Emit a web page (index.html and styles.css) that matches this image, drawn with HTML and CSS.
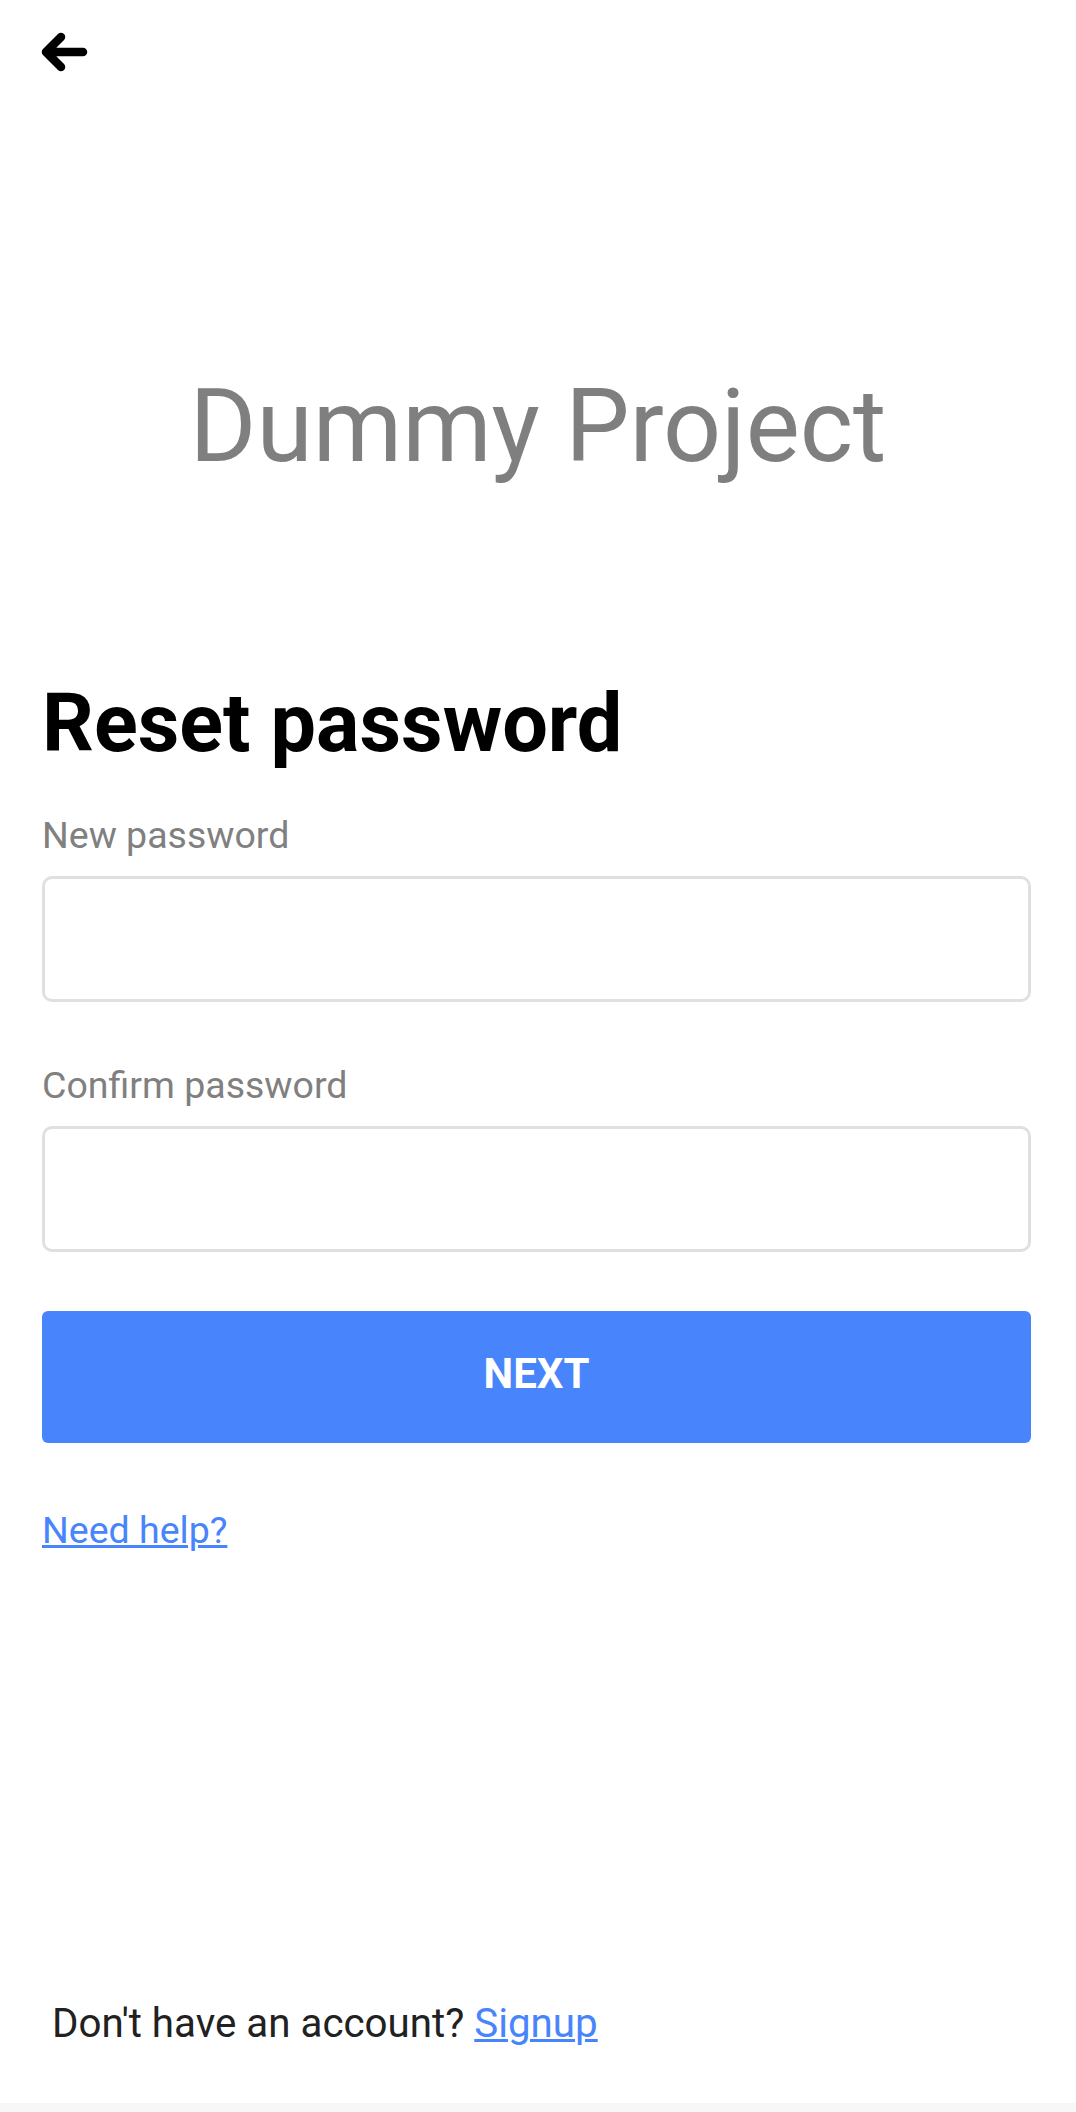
FILE: index.html
```html
<!DOCTYPE html>
<html lang="en">
<head>
    <meta charset="UTF-8">
    <meta name="viewport" content="width=device-width, initial-scale=1.0">
    <title>Reset password</title>
    <link rel="stylesheet" href="styles.css">
</head>
<body>
    <div class="screen">
        <div class="topbar">
            <a class="back" href="#" aria-label="Back">
                <svg width="56" height="56" viewBox="0 0 56 56">
                    <path d="M25 13L10 28l15 15M10 28h37" fill="none" stroke="#000" stroke-width="8.5" stroke-linecap="round" stroke-linejoin="round"/>
                </svg>
            </a>
        </div>

        <div class="brand">Dummy Project</div>

        <form class="form" onsubmit="return false;">
            <h1>Reset password</h1>

            <label class="label" for="newPassword">New password</label>
            <input class="field" type="password" id="newPassword">

            <label class="label label-second" for="confirmPassword">Confirm password</label>
            <input class="field" type="password" id="confirmPassword">

            <button class="next" type="submit">NEXT</button>

            <a class="help" href="#">Need help?</a>
        </form>

        <div class="footer">
            <p class="signup">Don't have an account? <a href="#">Signup</a></p>
        </div>
    </div>
    <div class="navbar"></div>
</body>
</html>
```

FILE: styles.css
```css
html, body {
    margin: 0;
    padding: 0;
}
body {
    font-family: Roboto, "Liberation Sans", sans-serif;
    background-color: #fff;
    display: flex;
    flex-direction: column;
    min-height: 100vh;
}
.screen {
    flex: 1;
    display: flex;
    flex-direction: column;
}
.topbar {
    padding: 24px 0 0 36px;
    height: 56px;
}
.back {
    display: block;
    width: 56px;
    height: 56px;
}
.back svg {
    display: block;
}
.brand {
    margin-top: 286px;
    font-size: 102px;
    line-height: 120px;
    color: #7f7f7f;
    text-align: center;
}
.form {
    display: flex;
    flex-direction: column;
    align-items: flex-start;
    padding: 0 45px 0 42px;
}
h1 {
    margin: 196px 0 0;
    font-size: 81px;
    line-height: 84px;
    font-weight: 700;
    color: #000;
}
.label {
    margin-top: 46px;
    font-size: 37.5px;
    line-height: 46px;
    color: #808080;
}
.label-second {
    margin-top: 60px;
}
.field {
    box-sizing: border-box;
    width: 100%;
    height: 126px;
    margin-top: 18px;
    border: 3px solid #e0e0e0;
    border-radius: 10px;
    background: #fff;
    font-family: inherit;
    font-size: 40px;
    padding: 0 20px;
    outline: none;
}
.next {
    box-sizing: border-box;
    width: 100%;
    height: 132px;
    margin-top: 59px;
    padding: 0 0 6px;
    border: none;
    border-radius: 6px;
    background-color: #4884fc;
    color: #fff;
    font-family: inherit;
    font-size: 42px;
    font-weight: 700;
    line-height: 126px;
    cursor: pointer;
}
.help {
    margin-top: 64px;
    font-size: 37.5px;
    line-height: 46px;
    color: #4884fc;
    text-decoration-thickness: 3px;
    text-underline-offset: 2px;
}
.footer {
    margin-top: auto;
    padding: 0 0 55px 52px;
}
.signup {
    margin: 0;
    font-size: 40.3px;
    line-height: 48px;
    color: #212121;
}
.signup a {
    color: #4884fc;
    text-decoration-thickness: 3px;
    text-underline-offset: 2px;
}
.navbar {
    height: 9px;
    background-color: #f7f7f7;
}
```
